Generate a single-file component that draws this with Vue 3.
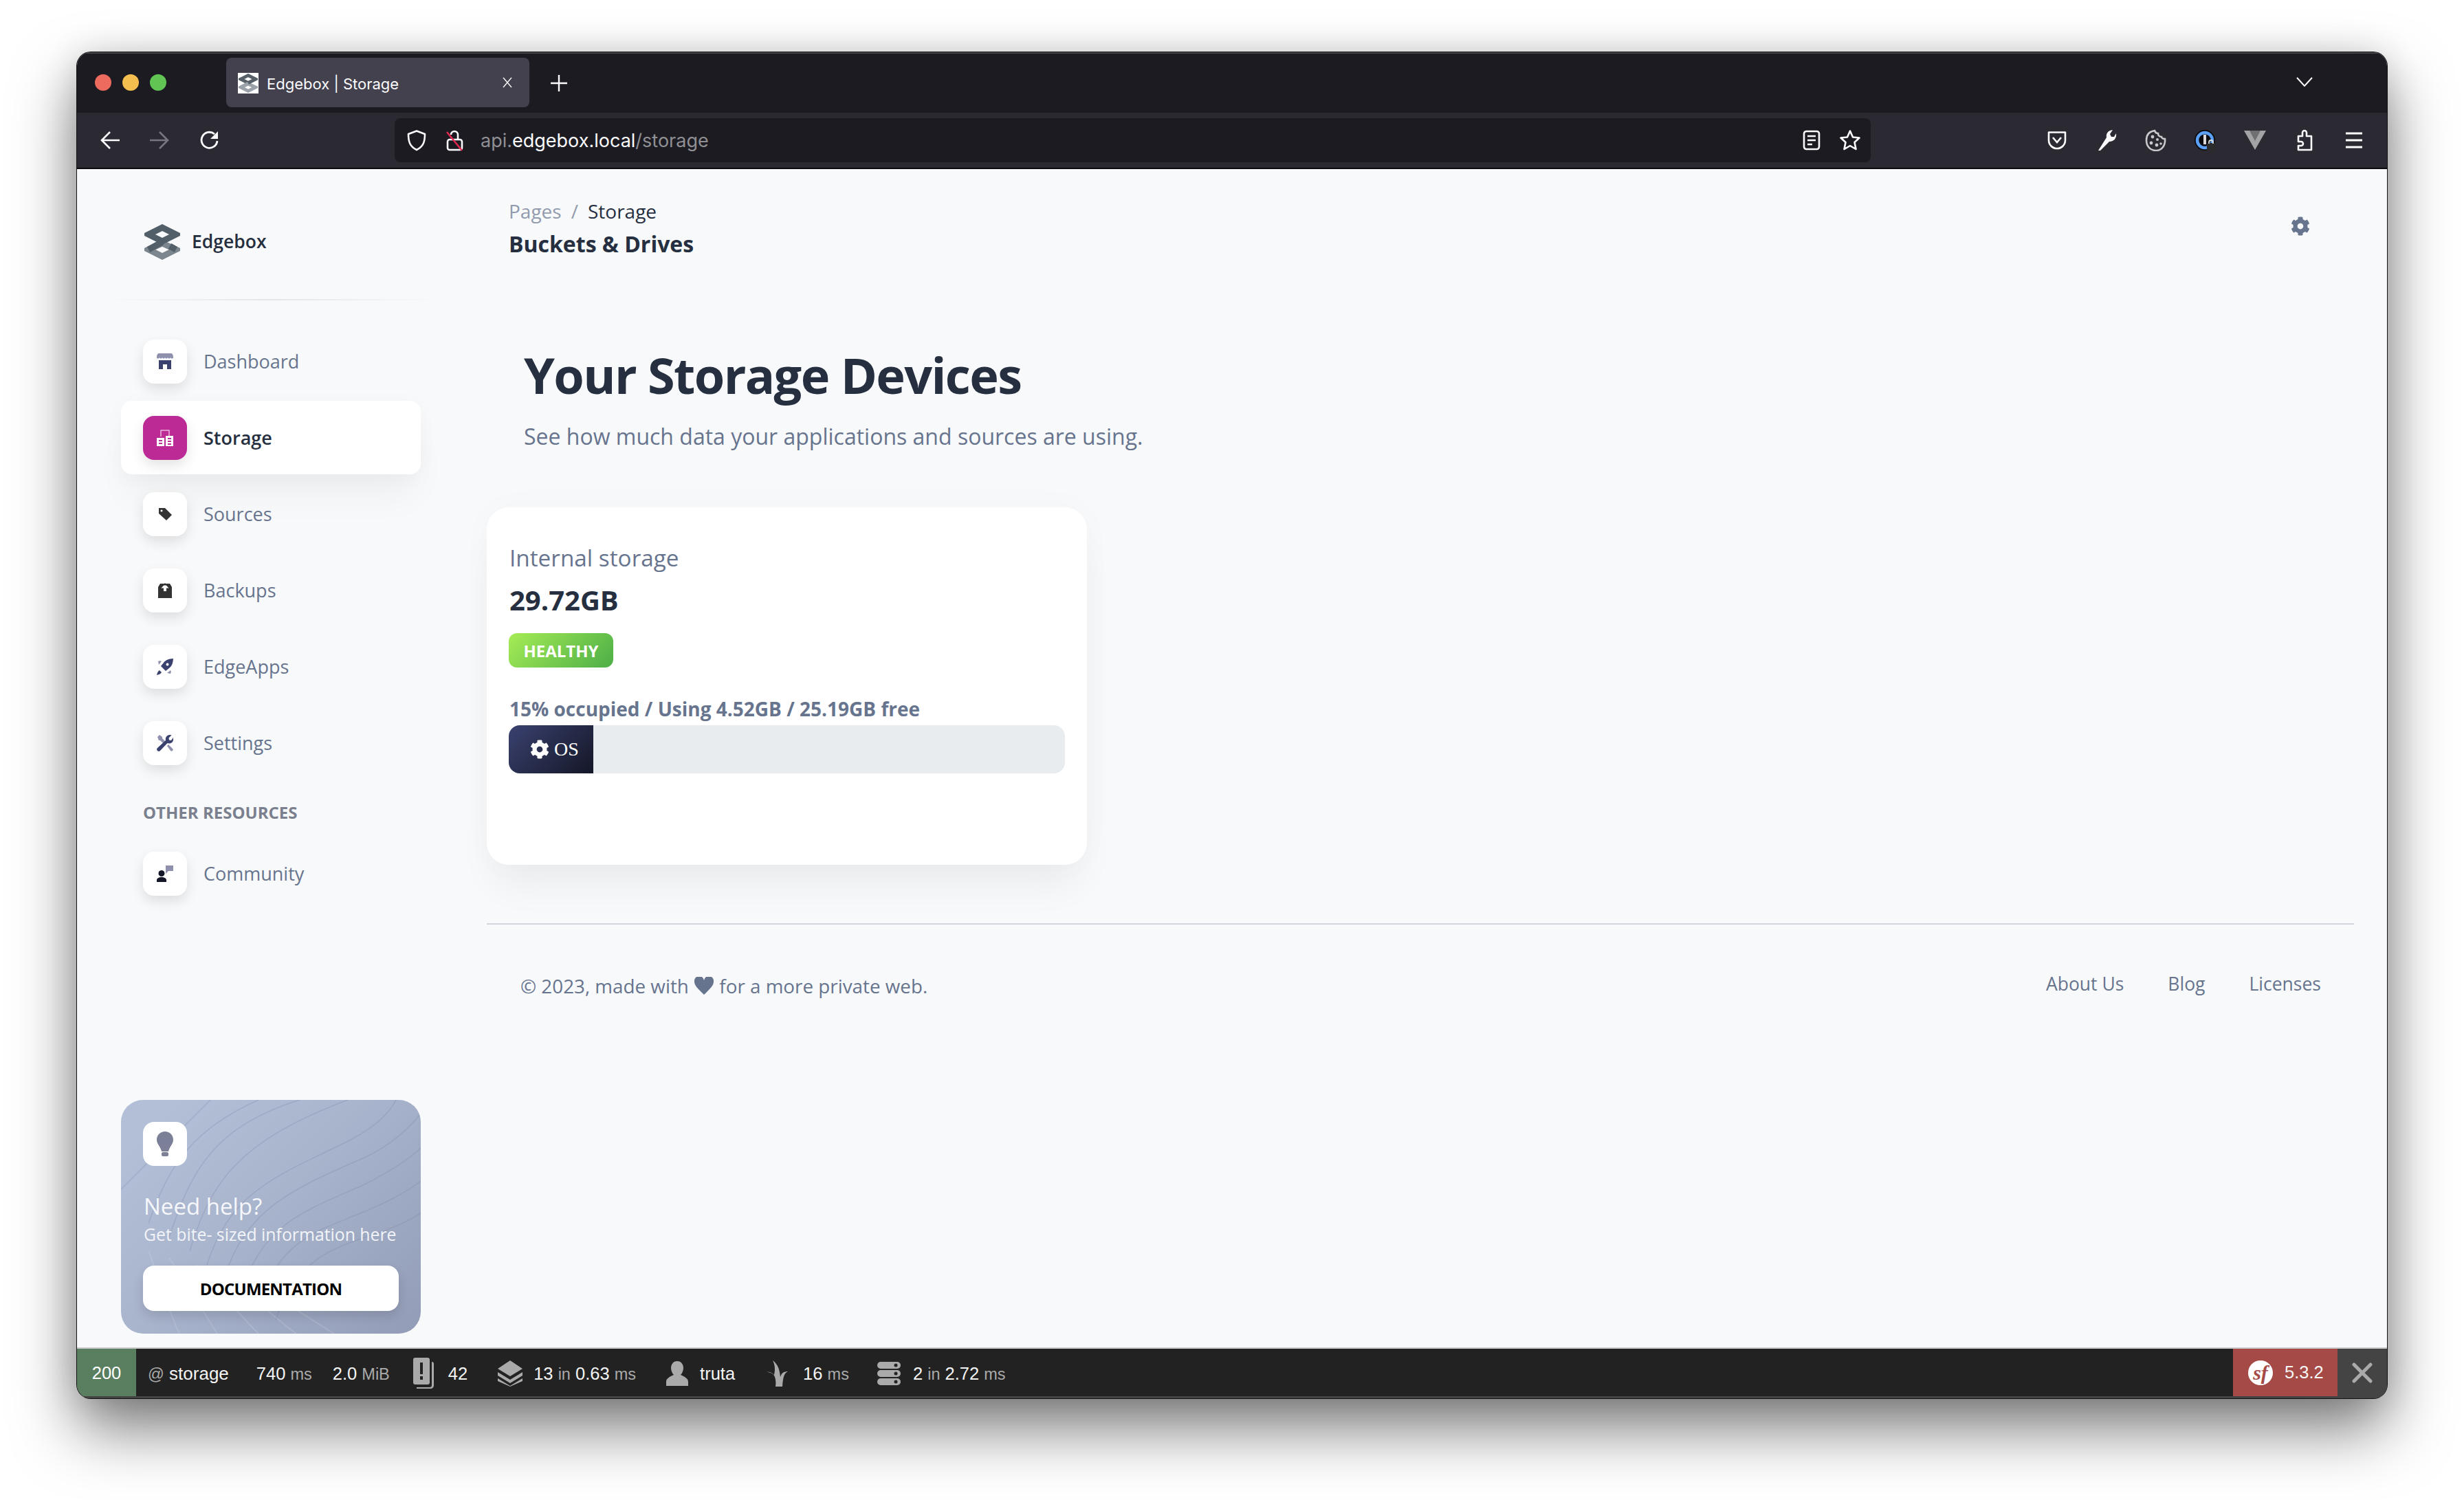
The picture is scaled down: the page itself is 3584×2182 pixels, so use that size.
<script setup>
const navTop = [
  { label: 'Dashboard', icon: 'shop' },
  { label: 'Storage', icon: 'office', active: true },
  { label: 'Sources', icon: 'tag' },
  { label: 'Backups', icon: 'box' },
  { label: 'EdgeApps', icon: 'rocket' },
  { label: 'Settings', icon: 'tools' }
]
const cog = 'M487.4 315.7l-42.6-24.6c4.3-23.2 4.3-47 0-70.2l42.6-24.6c4.9-2.8 7.1-8.6 5.5-14-11.1-35.6-30-67.8-54.7-94.6-3.8-4.1-10-5.1-14.8-2.3L380.8 110c-17.9-15.4-38.5-27.3-60.8-35.1V25.8c0-5.6-3.9-10.5-9.4-11.7-36.7-8.2-74.3-7.8-109.2 0-5.5 1.2-9.4 6.1-9.4 11.7V75c-22.2 7.9-42.8 19.8-60.8 35.1L88.7 85.5c-4.9-2.8-11-1.9-14.8 2.3-24.7 26.7-43.6 58.9-54.7 94.6-1.7 5.4.6 11.2 5.5 14L67.3 221c-4.3 23.2-4.3 47 0 70.2l-42.6 24.6c-4.9 2.8-7.1 8.6-5.5 14 11.1 35.6 30 67.8 54.7 94.6 3.8 4.1 10 5.1 14.8 2.3l42.6-24.6c17.9 15.4 38.5 27.3 60.8 35.1v49.2c0 5.6 3.9 10.5 9.4 11.7 36.7 8.2 74.3 7.8 109.2 0 5.5-1.2 9.4-6.1 9.4-11.7v-49.2c22.2-7.9 42.8-19.8 60.8-35.1l42.6 24.6c4.9 2.8 11 1.9 14.8-2.3 24.7-26.7 43.6-58.9 54.7-94.6 1.5-5.5-.7-11.3-5.6-14.1zM256 336c-44.1 0-80-35.9-80-80s35.9-80 80-80 80 35.9 80 80-35.9 80-80 80z'
const contours = [
  'M0 130C40 90 70 60 130 0',
  'M40 180C70 90 110 40 200 0',
  'M70 200C100 110 130 40 260 0',
  'M100 220C130 120 170 60 330 0',
  'M125 240C160 130 230 110 330 60 370 40 390 20 400 0',
  'M150 260C180 160 250 130 340 90 390 70 420 40 436 20',
  'M175 280C205 180 270 160 350 125 390 105 420 85 436 70',
  'M200 300C230 200 290 190 360 160 395 145 420 130 436 118',
  'M225 320C255 230 310 215 370 195 400 185 420 175 436 165'
]
const contoursLow = [
  'M40 220C60 270 70 310 85 340',
  'M70 230C100 270 120 310 140 340',
  'M110 240C140 275 170 310 200 340',
  'M150 250C190 285 220 315 255 340',
  'M190 260C230 290 270 315 310 340'
]
</script>

<template>
  <div class="screen">
    <div class="window">
      <div class="titlebar">
        <div class="traffic">
          <span class="dot red"></span><span class="dot yellow"></span><span class="dot green"></span>
        </div>
        <div class="tab">
          <span class="favicon">
            <svg viewBox="0 0 52 52" width="28" height="28">
              <path d="M26 28 46 37 26 47 6 37z" fill="none" stroke="#9aa1a8" stroke-width="9"/>
              <path d="M26 5 46 15 26 25 6 15z" fill="none" stroke="#565f68" stroke-width="9"/>
              <path d="M6 37 26 26" fill="none" stroke="#9aa1a8" stroke-width="9"/>
            </svg>
          </span>
          <span class="tab-title">Edgebox | Storage</span>
          <svg class="tab-close" viewBox="0 0 16 16" width="16" height="16"><path d="M2 1l12 14M14 1 2 15" stroke="#fbfbfe" stroke-width="1.4"/></svg>
        </div>
        <svg class="newtab" viewBox="0 0 24 24" width="24" height="24"><path d="M12 0v24M0 12h24" stroke="#fbfbfe" stroke-width="2.4"/></svg>
        <svg class="tabs-menu" viewBox="0 0 24 14" width="24" height="14"><path d="M1 1l11 12L23 1" fill="none" stroke="#fbfbfe" stroke-width="2"/></svg>
      </div>

      <div class="toolbar">
        <span class="tb-btn"><svg viewBox="0 0 32 32" width="32" height="32"><path d="M29 16H4M15 4 3 16l12 12" fill="none" stroke="#fbfbfe" stroke-width="2.6"/></svg></span>
        <span class="tb-btn"><svg viewBox="0 0 32 32" width="32" height="32"><path d="M1 16h25M15 4l12 12-12 12" fill="none" stroke="#77767e" stroke-width="2.6"/></svg></span>
        <span class="tb-btn"><svg viewBox="0 0 32 32" width="32" height="32"><path d="M27 17a11.5 11.5 0 1 1-4-10" fill="none" stroke="#fbfbfe" stroke-width="2.8"/><path d="M28 3v11H17z" fill="#fbfbfe"/></svg></span>
        <div class="urlbar">
          <svg viewBox="0 0 32 32" width="32" height="32"><path d="M16 2.5 28 7c0 11-2 18-12 23C6 25 4 18 4 7z" fill="none" stroke="#fbfbfe" stroke-width="2.6" stroke-linejoin="round"/></svg>
          <svg class="lock" viewBox="0 0 32 32" width="32" height="32"><rect x="5" y="15" width="21" height="15" rx="3" fill="none" stroke="#fbfbfe" stroke-width="2.6"/><path d="M20 15V8a5 5 0 0 0-10 0" fill="none" stroke="#fbfbfe" stroke-width="2.6"/><path d="M4 4l22 27" stroke="#e22850" stroke-width="2.6"/></svg>
          <span class="url"><span class="dim">api.</span>edgebox.local<span class="dim">/storage</span></span>
          <svg class="reader" viewBox="0 0 32 32" width="32" height="32"><rect x="5" y="3" width="22" height="26" rx="3.5" fill="none" stroke="#fbfbfe" stroke-width="2.6"/><path d="M10 10h12M10 16h12M10 22h7" stroke="#fbfbfe" stroke-width="2.6"/></svg>
          <svg viewBox="0 0 32 32" width="32" height="32"><path d="M16 2.5l4 9 9.5 1-7 6.5 2 10-8.500-5-8.500 5 2-10-7-6.500 9.500-1z" fill="none" stroke="#fbfbfe" stroke-width="2.6" stroke-linejoin="round"/></svg>
        </div>
        <div class="extensions">
          <span class="tb-btn"><svg viewBox="0 0 32 32" width="32" height="32"><path d="M4 4.500h24V16a12 12 0 0 1-24 0z" fill="none" stroke="#fbfbfe" stroke-width="2.6" stroke-linejoin="round"/><path d="M10 12l6 7 6-7" fill="none" stroke="#fbfbfe" stroke-width="2.6"/></svg></span>
          <span class="tb-btn"><svg viewBox="0 0 32 32" width="32" height="32"><path d="M4 31 16 12c-1-6 2-10 9-11l-4 6 2 4 4 0 3-5c1 7-3 12-10 12L7 31z" fill="#fbfbfe"/></svg></span>
          <span class="tb-btn"><svg viewBox="0 0 32 32" width="32" height="32"><path d="M14 2c1 3 2 4 5 4 0 3 2 5 5 5 0 2 3 3 5 3 1 10-5 17-13 17S2 25 2 16 7 3 14 2z" fill="none" stroke="#c9c9cc" stroke-width="2.6"/><g fill="#c9c9cc"><circle cx="11" cy="11" r="2.400"/><circle cx="18" cy="15" r="2"/><circle cx="9" cy="20" r="2.400"/><circle cx="17" cy="23" r="2.400"/><circle cx="23" cy="21" r="1.800"/></g></svg></span>
          <span class="tb-btn"><svg viewBox="0 0 32 32" width="32" height="32"><circle cx="15" cy="16" r="15" fill="#0b0b10"/><circle cx="15" cy="16" r="11" fill="none" stroke="#5aa0f5" stroke-width="4.500"/><rect x="13" y="8" width="4" height="14" fill="#d8d8d8"/><rect x="18" y="20" width="12" height="12" rx="2" fill="#2c2c2c"/><path d="M21 21v-2a3 3 0 0 1 6 0v2" fill="none" stroke="#ddd" stroke-width="1.800"/></svg></span>
          <span class="tb-btn"><svg viewBox="0 0 32 32" width="32" height="32"><path d="M0 2h32L16 30z" fill="#a3a3a6"/><path d="M8 2h16l-8 15z" fill="#6f6f72"/></svg></span>
          <span class="tb-btn"><svg viewBox="0 0 32 32" width="32" height="32"><path d="M13 5a3 3 0 0 1 6 0v5h7v20H7v-6h4a3 3 0 0 0 0-6H7v-8h6z" fill="none" stroke="#fbfbfe" stroke-width="2.600" stroke-linejoin="round"/></svg></span>
          <span class="tb-btn"><svg viewBox="0 0 32 32" width="32" height="32"><path d="M4 6h24M4 16h24M4 26h24" stroke="#fbfbfe" stroke-width="2.800"/></svg></span>
        </div>
      </div>

      <div class="content">
        <aside class="sidebar">
          <div class="brand">
            <svg viewBox="0 0 52 52" width="52" height="52">
              <path d="M26 28 46 37 26 47 6 37z" fill="none" stroke="#7c868e" stroke-width="9"/>
              <path d="M26 5 46 15 26 25 6 15z" fill="none" stroke="#525f69" stroke-width="9"/>
              <path d="M6 37 26 26" fill="none" stroke="#525f69" stroke-width="9"/>
              <path d="M46 37 37 32" fill="none" stroke="#525f69" stroke-width="9"/>
            </svg>
            <span class="brand-name">Edgebox</span>
          </div>
          <div class="brand-rule"></div>

          <nav class="nav">
            <a v-for="item in navTop" :key="item.label" class="nav-item" :class="{ active: item.active }">
              <span class="icon-box">
                <svg viewBox="0 0 24 24" width="24" height="24">
                  <template v-if="item.icon === 'shop'">
                    <path d="M3 0h18c1.500 0 3 2.500 3 5v1c0 2-3 2-4 0-1 2-3 2-4 0-1 2-3 2-4 0-1 2-3 2-4 0-1 2-3 2-4 0-1 2-4 2-4 0V5C0 2.500 1.500 0 3 0z" fill="#8e90ad"/>
                    <path d="M3 10h18v13h-6v-7H9v7H3z" fill="#3a416f"/>
                  </template>
                  <template v-else-if="item.icon === 'office'">
                    <path d="M6 10V1h12v8" fill="none" stroke="#fff" stroke-opacity=".65" stroke-width="1.500"/>
                    <path d="M0 12h11v12H0zM3 15v2h5v-2zM3 19v2h5v-2zM13 9h11v15H13zM16 12v2h5v-2zM16 16v2h5v-2zM16 20v2h5v-2z" fill="#fff" fill-rule="evenodd"/>
                  </template>
                  <template v-else-if="item.icon === 'tag'">
                    <path d="M3 3h9l10 10-8 8L3 11zM7 5.500a1.500 1.500 0 1 0 .01 0z" fill="#333" fill-rule="evenodd"/>
                  </template>
                  <template v-else-if="item.icon === 'box'">
                    <path d="M5 2h14l3 5v16H2V7z" fill="#333"/>
                    <path d="M12 2.500l5.500 6h-3.500v4.500h-4V8.500H6.500z" fill="#fff"/>
                    <path d="M12 1l3 3.500H9z" fill="#333"/>
                  </template>
                  <template v-else-if="item.icon === 'rocket'">
                    <path d="M24 0c-7 .5-11 2-14 6l-4 5 7 7 5-4c4-3 5.500-7 6-14zM15.500 6.500a2 2 0 1 0 .01 0z" fill="#3a416f" fill-rule="evenodd"/>
                    <path d="M4 17c-2 1-3 3-4 7 4-1 6-2 7-4z" fill="#3a416f"/>
                    <path d="M2 4c2-1 4-1 5 0L3 9zM20 22c1-2 1-4 0-5l-5 4z" fill="#8e90ad"/>
                  </template>
                  <template v-else-if="item.icon === 'tools'">
                    <path d="M1 3l3-3 4 3v2l6 6-3 3-6-6H3zM15 16l2-2 6 6c1 1 1 2 0 3s-2 1-3 0z" fill="#8e90ad"/>
                    <path d="M1 23a3 3 0 0 1 0-4L13 8c-.7-3 .5-6 3.500-7.500 2-.8 4-.6 5 0l-4 4 .5 3 3 .5 3-4c.5 3 0 6-2.500 7.500-2 1.200-4 1.200-6 .5L5 23a3 3 0 0 1-4 0z" fill="#3a416f"/>
                  </template>
                </svg>
              </span>
              <span class="nav-label">{{ item.label }}</span>
            </a>
          </nav>

          <h6 class="nav-heading">OTHER RESOURCES</h6>
          <a class="nav-item">
            <span class="icon-box">
              <svg viewBox="0 0 24 24" width="24" height="24">
                <path d="M13 0h11v8h-7l-4 4z" fill="#8e90ad"/>
                <circle cx="7" cy="11.500" r="4.500" fill="#141727"/>
                <path d="M0 24v-3c0-2 3-4 7-4s7 2 7 4v3z" fill="#141727"/>
              </svg>
            </span>
            <span class="nav-label">Community</span>
          </a>

          <div class="help">
            <svg class="help-lines" viewBox="0 0 436 340" width="436" height="340">
              <path v-for="d in contours" :key="d" :d="d" fill="none" stroke="#7f8aa8" stroke-opacity=".32" stroke-width="1.500"/>
              <path v-for="d in contoursLow" :key="d" :d="d" fill="none" stroke="#fff" stroke-opacity=".13" stroke-width="2"/>
            </svg>
            <span class="icon-box help-icon">
              <svg viewBox="0 0 24 36" width="24" height="36">
                <path d="M12 0c7 0 12 5 12 12 0 6-5 9-7 17H7C5 21 0 18 0 12 0 5 5 0 12 0z" fill="#7b7f98"/>
                <rect x="7" y="30" width="10" height="6" rx="2" fill="#7b7f98"/>
              </svg>
            </span>
            <h6 class="help-title">Need help?</h6>
            <p class="help-text">Get bite- sized information here</p>
            <a class="help-btn">DOCUMENTATION</a>
          </div>
        </aside>

        <main class="main">
          <header class="page-head">
            <div>
              <div class="crumbs"><span class="crumb-muted">Pages</span><span class="crumb-sep">/</span><span>Storage</span></div>
              <h6 class="page-name">Buckets &amp; Drives</h6>
            </div>
            <svg class="head-gear" viewBox="0 0 512 512" width="28" height="28"><path :d="cog" fill="#67748e"/></svg>
          </header>

          <section class="intro">
            <h1>Your Storage Devices</h1>
            <p>See how much data your applications and sources are using.</p>
          </section>

          <section class="card">
            <p class="card-label">Internal storage</p>
            <h5 class="card-size">29.72GB</h5>
            <span class="badge">HEALTHY</span>
            <p class="card-usage">15% occupied / Using 4.52GB / 25.19GB free</p>
            <div class="progress">
              <div class="progress-os" :style="{ width: '15.2%' }">
                <svg viewBox="0 0 512 512" width="28" height="28"><path :d="cog" fill="#fff"/></svg>
                <span>OS</span>
              </div>
            </div>
          </section>

          <hr class="rule" />

          <footer class="foot">
            <span class="copy">© 2023, made with <svg viewBox="0 0 28 26" width="28" height="26"><path d="M14 26C6 18 0 13 0 7a7 7 0 0 1 14-2 7 7 0 0 1 14 2c0 6-6 11-14 19z" fill="#67748e"/></svg> for a more private web.</span>
            <span class="foot-links"><a>About Us</a><a>Blog</a><a>Licenses</a></span>
          </footer>
        </main>
      </div>

      <div class="debugbar">
        <span class="status">200</span>
        <span class="dbg route"><i>@</i> storage</span>
        <span class="dbg time">740 <i>ms</i></span>
        <span class="dbg mem">2.0 <i>MiB</i></span>
        <svg class="dbg-icon logs" viewBox="0 0 30 46" width="30" height="46"><path d="M3 0h18a3 3 0 0 1 3 3v33a3 3 0 0 1-3 3H3a3 3 0 0 1-3-3V3a3 3 0 0 1 3-3z" fill="#aaa"/><path d="M10 7h4v17h-4zM10 27h4v5h-4z" fill="#222"/><path d="M27 6c2 0 3 1 3 3v31c0 3-2 5-5 5H5v-2h19c2 0 3-1 3-3z" fill="#aaa"/></svg>
        <span class="dbg logs-val">42</span>
        <svg class="dbg-icon layers" viewBox="0 0 36 38" width="36" height="38"><path d="M18 0l18 12-18 11L0 12zM0 17l18 11 18-11v5L18 33 0 22zM0 26l18 11 18-11v4L18 38 0 30z" fill="#aaa"/></svg>
        <span class="dbg cache">13 <i>in</i> 0.63 <i>ms</i></span>
        <svg class="dbg-icon person" viewBox="0 0 32 36" width="32" height="36"><path d="M16 0c6 0 9 5 9 10 0 4-2 8-4 10 5 2 11 5 11 10v6H0v-6c0-5 6-8 11-10-2-2-4-6-4-10 0-5 3-10 9-10z" fill="#aaa"/></svg>
        <span class="dbg user">truta</span>
        <svg class="dbg-icon grass" viewBox="0 0 32 38" width="32" height="38"><path d="M9 0c8 6 10 14 11 24 2-6 5-8 11-8-5 2-7 7-8 22H13c1-6 0-11-1-14C10 19 6 17 0 17c5-1 8 1 11 4C13 13 12 6 9 0z" fill="#aaa"/></svg>
        <span class="dbg twig">16 <i>ms</i></span>
        <svg class="dbg-icon db" viewBox="0 0 34 34" width="34" height="34"><g fill="#aaa"><rect y="0" width="34" height="10" rx="5"/><rect y="12" width="34" height="10" rx="5"/><rect y="24" width="34" height="10" rx="5"/></g><g fill="#222"><circle cx="27" cy="5" r="2.500"/><circle cx="27" cy="17" r="2.500"/><circle cx="27" cy="29" r="2.500"/></g></svg>
        <span class="dbg doctrine">2 <i>in</i> 2.72 <i>ms</i></span>
        <span class="sf-block">
          <span class="sf-logo">sf</span>
          <span>5.3.2</span>
        </span>
        <span class="sf-close"><svg viewBox="0 0 30 30" width="30" height="30"><path d="M3 3l24 24M27 3 3 27" stroke="#aaa" stroke-width="5" stroke-linecap="round"/></svg></span>
      </div>
    </div>
  </div>
</template>

<style>
html, body { margin: 0; background: #fff; }
</style>

<style scoped>
.screen { box-sizing: border-box; width: 3584px; height: 2182px; padding: 76px 112px 148px; background: #fff; font-family: "Open Sans", "Noto Sans", sans-serif; }
.window { position: relative; height: 100%; display: flex; flex-direction: column; border-radius: 20px; overflow: hidden; background: #f8f9fa; box-shadow: 0 0 0 1px #111, 0 44px 90px rgba(0,0,0,.52), 0 0 50px rgba(0,0,0,.12); }

.titlebar { position: relative; flex: 0 0 88px; display: flex; align-items: center; background: #1c1b22; border-top: 2px solid #45454a; box-sizing: border-box; }
.traffic { display: flex; gap: 16px; padding-left: 26px; width: 190px; box-sizing: border-box; margin-top: -2px; }
.dot { width: 24px; height: 24px; border-radius: 50%; }
.red { background: #ed6a5e; }
.yellow { background: #f4bf4f; }
.green { background: #61c554; }
.tab { margin-left: 27px; width: 441px; height: 72px; margin-top: -2px; display: flex; align-items: center; border-radius: 8px; background: #42414d; box-sizing: border-box; padding-left: 17px; font: 400 22px Inter, "Liberation Sans", sans-serif; color: #fbfbfe; }
.favicon { width: 30px; height: 30px; background: #fff; display: flex; align-items: center; justify-content: center; margin-top: 2px; }
.tab-title { margin-left: 12px; margin-top: 3px; }
.tab-close { margin-left: auto; margin-right: 24px; }
.newtab { margin-left: 31px; }
.tabs-menu { margin-left: auto; margin-right: 108px; margin-top: -4px; }

.toolbar { flex: 0 0 80px; display: flex; align-items: center; background: #2b2a33; padding-left: 13px; border-bottom: 2px solid #0c0c0d; box-sizing: content-box; }
.tb-btn { width: 72px; height: 64px; display: flex; align-items: center; justify-content: center; }
.urlbar { margin-left: 233px; width: 2147px; height: 64px; box-sizing: border-box; padding: 0 14px 0 16px; display: flex; align-items: center; gap: 24px; border-radius: 8px; background: #1c1b22; color: #fbfbfe; font: 400 27px Inter, "Liberation Sans", sans-serif; }
.url { margin-left: -3px; }
.dim { color: #8f8f94; }
.reader { margin-left: auto; }
.extensions { margin-left: auto; margin-right: 12px; display: flex; }

.content { flex: 1; min-height: 0; display: grid; grid-template-columns: 596px 1fr; background: #f8f9fa; }

.sidebar { display: flex; flex-direction: column; padding: 0 96px 20px 64px; min-height: 0; }
.brand { display: flex; align-items: center; gap: 17px; padding: 80px 0 0 34px; height: 52px; font-size: 26.500px; font-weight: 600; color: #252f40; }
.brand-name { margin-bottom: 2px; }
.brand-rule { height: 2px; margin: 57px -28px 0 -26px; background: linear-gradient(90deg, rgba(0,0,0,0), rgba(0,0,0,.08), rgba(0,0,0,0)); }
.nav { display: flex; flex-direction: column; gap: 4px; margin-top: 35px; }
.nav-item { height: 107px; display: flex; align-items: center; gap: 25px; padding-left: 32px; border-radius: 16px; font-size: 27px; color: #67748e; }
.nav-item.active { background: #fff; color: #252f40; font-weight: 600; box-shadow: 0 40px 54px -10px rgba(0,0,0,.045), 0 6px 30px rgba(0,0,0,.03); }
.nav-label { margin-left: -1px; }
.icon-box { width: 64px; height: 64px; flex: none; display: flex; align-items: center; justify-content: center; border-radius: 16px; background: #fff; box-shadow: 0 8px 18px rgba(0,0,0,.11); }
.active .icon-box { background: #bc2a96; }
.nav-heading { margin: 29px 0 16px 32px; font-size: 24px; line-height: 38px; font-weight: 700; color: #7a808e; white-space: nowrap; }

.help { position: relative; margin-top: auto; height: 340px; box-sizing: border-box; padding: 32px; border-radius: 32px; overflow: hidden; background: linear-gradient(135deg, #b3bfd7 10%, #a9b4cd 45%, #929cb6 100%); }
.help-lines { position: absolute; left: 0; top: 0; }
.help-icon { position: relative; box-shadow: none; }
.help-title { position: relative; margin: 36px 0 0 1px; font-size: 33px; line-height: 46px; font-weight: 500; color: #f6f7fa; }
.help-text { position: relative; margin: 0 0 0 1px; font-size: 24.800px; line-height: 34px; font-weight: 500; color: #f2f4f8; white-space: nowrap; }
.help-btn { position: relative; display: flex; align-items: center; justify-content: center; width: 372px; height: 66px; margin-top: 29px; border-radius: 16px; background: #fff; color: #000; font-size: 24px; letter-spacing: -.8px; font-weight: 700; box-shadow: 0 8px 16px rgba(0,0,0,.12); }

.main { padding: 43px 48px 0 0; min-width: 0; }
.page-head { display: flex; justify-content: space-between; padding-left: 32px; }
.crumbs { display: flex; gap: 14px; font-size: 28px; line-height: 36px; color: #252f40; }
.crumb-muted, .crumb-sep { color: #67748e; opacity: .7; }
.page-name { margin: 10px 0 0; font-size: 32px; line-height: 40px; font-weight: 700; color: #252f40; }
.head-gear { margin: 26px 64px 0 0; }
.intro { padding-left: 54px; }
.intro h1 { margin: 126px 0 0; font-size: 72px; line-height: 88px; font-weight: 700; letter-spacing: -1.630px; color: #252f40; white-space: nowrap; }
.intro p { margin: 21px 0 0; font-size: 32px; line-height: 50px; color: #67748e; }

.card { box-sizing: border-box; width: 873px; height: 520px; margin-top: 78px; padding: 53px 32px 0 33px; border-radius: 32px; background: #fff; box-shadow: 0 40px 54px -10px rgba(0,0,0,.05), 0 0 50px rgba(0,0,0,.025); }
.card-label { margin: 0; font-size: 33.300px; line-height: 40px; color: #67748e; }
.card-size { margin: 17px 0 0; font-size: 40px; line-height: 50px; font-weight: 700; color: #252f40; }
.badge { display: flex; align-items: center; justify-content: center; width: 152px; height: 50px; margin: 23px 0 0 -1px; border-radius: 12px; background: linear-gradient(135deg, #a6ec55, #4cae47); color: #fff; font-size: 24px; font-weight: 700; }
.card-usage { margin: 40px 0 0; font-size: 28px; line-height: 40px; font-weight: 700; color: #67748e; white-space: nowrap; }
.progress { width: 809px; height: 70px; margin: 4px 0 0 -1px; border-radius: 16px; overflow: hidden; background: #e9ecef; }
.progress-os { height: 100%; box-sizing: border-box; padding-left: 10px; display: flex; align-items: center; justify-content: center; gap: 7px; background: linear-gradient(135deg, #3a416f, #141727); color: #fff; font-family: "Liberation Serif", serif; font-size: 28px; }

.rule { margin: 85px 0 0; border: 0; height: 2px; background: #d3d5df; }
.foot { display: flex; justify-content: space-between; padding: 64px 48px 0 49px; color: #67748e; font-size: 27.800px; line-height: 48px; }
.copy { display: flex; align-items: center; gap: 1px; white-space: pre; margin-top: 1px; }
.foot-links { display: flex; gap: 64px; margin-top: -2px; font-size: 26.500px; }

.debugbar { position: relative; flex: 0 0 74px; display: flex; align-items: center; box-sizing: border-box; background: #222; border-top: 2px solid #c8c8c8; border-bottom: 3px solid #444; font: 400 25.500px "Liberation Sans", Arial, sans-serif; color: #f5f5f5; }
.status { width: 86px; align-self: stretch; padding-top: 2px; display: flex; align-items: center; justify-content: center; background: #5a7f60; color: #fff; }
.dbg, .dbg-icon { margin-top: 3px; }
.dbg { white-space: pre; }
.dbg i { font-style: normal; color: #aaa; font-size: 23.500px; }
.route { margin-left: 17px; font-size: 26px; }
.time { margin-left: 40px; }
.mem { margin-left: 30px; }
.logs { margin-left: 34px; }
.logs-val { margin-left: 21px; }
.layers { margin-left: 44px; }
.cache { margin-left: 16px; }
.person { margin-left: 44px; }
.user { margin-left: 17px; }
.grass { margin-left: 46px; }
.twig { margin-left: 21px; }
.db { margin-left: 41px; }
.doctrine { margin-left: 18px; }
.sf-block { margin-left: auto; width: 152px; align-self: stretch; display: flex; align-items: center; gap: 17px; padding-left: 22px; box-sizing: border-box; background: #a54a46; }
.sf-logo { width: 36px; height: 36px; flex: none; border-radius: 50%; background: #fff; color: #a54a46; display: flex; align-items: center; justify-content: center; font: italic 700 30px "Liberation Serif", serif; }
.sf-close { width: 72px; align-self: stretch; display: flex; align-items: center; justify-content: center; background: #444; }
</style>
